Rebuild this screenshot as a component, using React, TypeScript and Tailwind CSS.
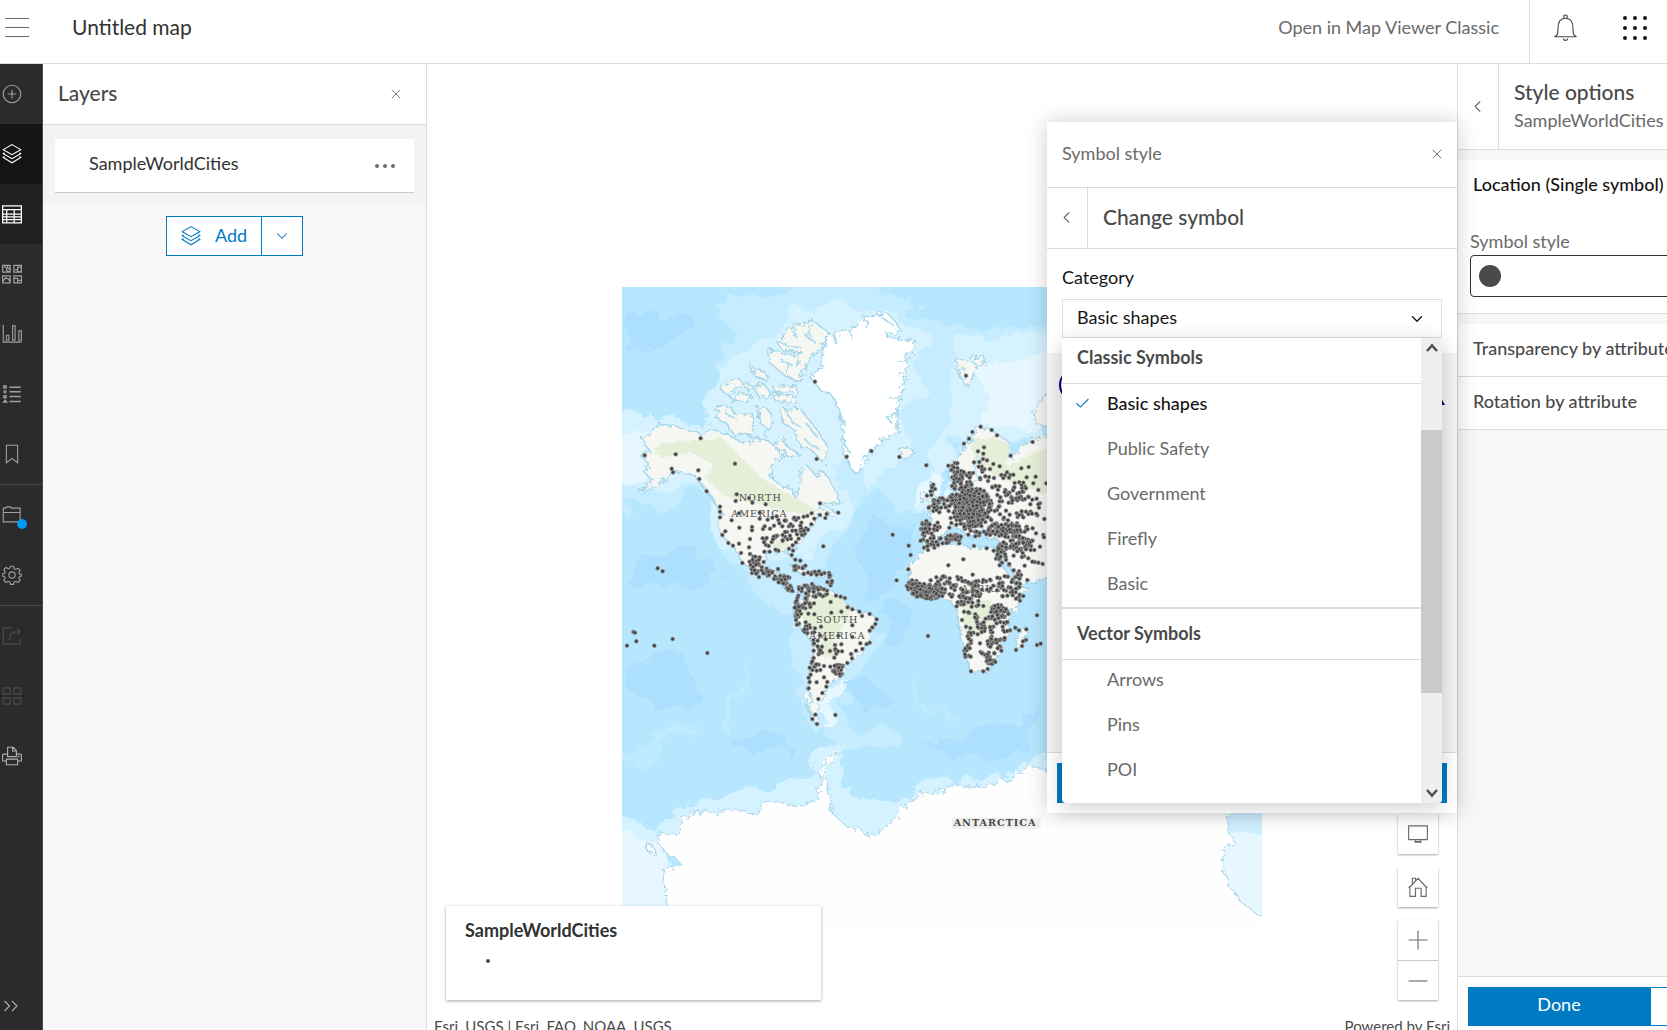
import React, { useMemo, useState } from "react";
import { ChevronDown, ChevronLeft, Check, X } from "lucide-react";

interface IconProps {
  className?: string;
  children: React.ReactNode;
}

// Thin outlined icon on a 32 unit grid
const Icon = ({ className = "size-5", children }: IconProps) => (
  <svg
    viewBox="0 0 32 32"
    className={className}
    fill="none"
    stroke="currentColor"
    strokeWidth="1.8"
    aria-hidden="true"
  >
    {children}
  </svg>
);

const LayersShape = () => (
  <>
    <path d="M16 1 30 9 16 17 2 9z" />
    <path d="M4 14 2 15.500 16 23.500 30 15.500 28 14M4 20 2 21.500 16 30 30 21.500 28 20" />
  </>
);

const gear =
  "M13.500 2h5l1 4 2.500 1 3.500-2 3.500 3.500-2 3.500 1 2.500 4 1v2l-4 1-1 2.500 2 3.500-3.500 3.500-3.500-2-2.500 1-1 4h-5l-1-4-2.500-1-3.500 2L3 24.500 5 21l-1-2.500-3.500-1v-3l3.500-1L5 11 3 7.500 6.500 4 10 6l2.500-1z";

const railTop = [
  {
    label: "Add",
    tone: "text-[#9f9f9f]",
    shape: (
      <>
        <circle cx="16" cy="16" r="14" />
        <path d="M16 9v14M9 16h14" />
      </>
    ),
  },
  { label: "Layers", tone: "bg-[#151515] text-white", shape: <LayersShape /> },
  {
    label: "Tables",
    tone: "bg-[#202020] text-white",
    shape: (
      <path
        d="M1 3h30v27H1zM1 9h30M1 16h30M1 20.500h30M1 25h30M7.500 9v21M19.500 9v21"
        strokeWidth="2"
      />
    ),
  },
  {
    label: "Basemap",
    tone: "text-[#9f9f9f]",
    shape: (
      <path
        d="M1 2h12v11H1zM19 2h12v11H19zM1 19h12v11H1zM19 19h12v11H19zM3 4l4 2 1 5 4 1M9 3v3l4 3M21 9h4V5h6M25 9v3h5M2 27l4-5 4 2 3 4M20 23h5v6M25 26h6"
        strokeWidth="2"
      />
    ),
  },
  {
    label: "Charts",
    tone: "text-[#9f9f9f]",
    shape: <path d="M2 1v28h30M7 18h4v8H7zM17 3h4v23h-4zM27 11h4v15h-4z" />,
  },
  {
    label: "Legend",
    tone: "text-[#9f9f9f]",
    shape: (
      <>
        <path d="M12 5h18M12 12.500h18M12 20h18M12 28h18" strokeWidth="2.4" />
        <path d="M3 3h3.500v3.500H3zM3 18.500h3.500V22H3zM2.500 29 5 26l2.500 3z" strokeWidth="2.2" />
        <circle cx="4.800" cy="12.500" r="1.800" strokeWidth="2" />
      </>
    ),
  },
  {
    label: "Bookmarks",
    tone: "text-[#9f9f9f]",
    shape: <path d="M7 2h18v28l-9-7-9 7z" />,
  },
];

const railBottom = [
  {
    label: "Share",
    tone: "text-[#4a4a4a]",
    shape: <path d="M16 3H2v26h27V20M12 23v-5c0-6 4-9 17-9M24 4l5 5-5 5" />,
  },
  {
    label: "Create app",
    tone: "text-[#4a4a4a]",
    shape: <path d="M2 3h11v10H2zM19 3h11v10H19zM2 19h11v10H2zM19 19h11v10H19z" />,
  },
  {
    label: "Print",
    tone: "text-[#b0b0b0]",
    shape: (
      <path d="M9 16V2h9l5 5v9M17 2v6h6M7 24H1V14l2-1h6v4h14v-4h6l2 1v10h-6M7 21h18v9H7zM25 17h3" />
    ),
  },
];

const RailButton = ({ label, tone, shape }: (typeof railTop)[number]) => (
  <button
    aria-label={label}
    className={`flex h-15 w-full items-center pl-0.5 ${tone}`}
  >
    <Icon>{shape}</Icon>
  </button>
);

const Rail = () => (
  <nav className="flex w-[43px] shrink-0 flex-col border-r border-[#4a4a4a] bg-[#2b2b2b]">
    {railTop.map((item) => (
      <RailButton key={item.label} {...item} />
    ))}
    <div className="border-y border-[#4a4a4a]">
      <button
        aria-label="Save and open"
        className="relative flex h-15 w-full items-center pl-0.5 text-[#9f9f9f]"
      >
        <Icon>
          <path d="M2 27V5h4l1-2h7l1 2h14v22zM2 12h27" />
        </Icon>
        <span className="absolute top-[34px] left-[17px] size-[10px] rounded-full bg-[#009af2]" />
      </button>
      <RailButton
        label="Map properties"
        tone="text-[#9f9f9f]"
        shape={
          <>
            <path d={gear} />
            <circle cx="16" cy="16" r="5" />
          </>
        }
      />
    </div>
    {railBottom.map((item) => (
      <RailButton key={item.label} {...item} />
    ))}
    <button
      aria-label="Expand"
      className="mt-auto flex h-12 items-center pl-0.5 text-[#b0b0b0]"
    >
      <Icon>
        <path d="m4 8 8 8-8 8M16 8l8 8-8 8" />
      </Icon>
    </button>
  </nav>
);

const Header = () => (
  <header className="flex h-16 shrink-0 items-center border-b border-[#dcdcdc] bg-white">
    <button aria-label="Menu" className="mb-2 ml-[5px] flex flex-col gap-2 py-1">
      <span className="h-px w-6 bg-[#6a6a6a]" />
      <span className="h-px w-6 bg-[#6a6a6a]" />
      <span className="h-px w-6 bg-[#6a6a6a]" />
    </button>
    <h1 className="mb-2.5 ml-[43px] text-[21px] text-[#323232]">Untitled map</h1>
    <a href="#classic" className="mr-[30px] mb-2 ml-auto text-[18px] text-[#6a6a6a]">
      Open in Map Viewer Classic
    </a>
    <div className="flex h-full items-center gap-11 border-l border-[#dcdcdc] pr-5 pb-2 pl-[22px]">
      <button aria-label="Notifications" className="text-[#4a4a4a]">
        <Icon className="size-[27px]">
          <path
            d="M3 27h26c-4-2-4-4-4-9 0-8-3-13-9-13s-9 5-9 13c0 5 0 7-4 9zM14 5V2.500C14 .8 18 .8 18 2.500V5M13.500 29c0 3 5 3 5 0"
            strokeWidth="1.400"
          />
        </Icon>
      </button>
      <button aria-label="App launcher" className="grid grid-cols-3 gap-1.5">
        {Array.from({ length: 9 }, (_, index) => (
          <span key={index} className="size-1 rounded-full bg-[#151515]" />
        ))}
      </button>
    </div>
  </header>
);

const LayersPanel = () => (
  <aside className="w-96 shrink-0 border-r border-[#dcdcdc] bg-[#f8f8f8]">
    <div className="flex h-[61px] items-center justify-between border-b border-[#dcdcdc] bg-white pr-[22px] pl-[15px]">
      <h2 className="pb-0.5 text-[21px] font-medium text-[#4a4a4a]">Layers</h2>
      <button aria-label="Close" className="text-[#6a6a6a]">
        <X size={16} strokeWidth={1.3} />
      </button>
    </div>
    <div className="bg-[#f3f3f3] px-3 pt-3.5 pb-3">
      <div className="flex h-[54px] items-center justify-between border-b border-[#cacaca] bg-white pr-[19px] pl-[34px]">
        <span className="pb-1 text-[18px] text-[#323232]">SampleWorldCities</span>
        <button aria-label="Options" className="flex gap-1">
          <span className="size-1 rounded-full bg-[#6a6a6a]" />
          <span className="size-1 rounded-full bg-[#6a6a6a]" />
          <span className="size-1 rounded-full bg-[#6a6a6a]" />
        </button>
      </div>
    </div>
    <div className="flex justify-center pt-[11px]">
      <div className="flex h-10 border border-[#007ac2] bg-white text-[#007ac2]">
        <button className="flex items-center gap-[14px] px-3.5 text-[18px]">
          <Icon>
            <LayersShape />
          </Icon>
          <span className="pb-0.5">Add</span>
        </button>
        <button
          aria-label="More add options"
          className="flex w-[41px] items-center justify-center border-l border-[#007ac2]"
        >
          <ChevronDown size={18} strokeWidth={1.4} />
        </button>
      </div>
    </div>
  </aside>
);

const land = [
  // North America
  "M70 475 115 432 160 437 245 465 270 450 320 462 370 490 400 485 430 475 460 495 490 470 500 500 535 520 520 530 480 528 452 560 450 590 480 615 515 625 528 660 532 635 545 610 540 585 560 555 590 590 605 570 630 600 650 640 660 668 600 672 590 690 625 685 660 700 600 705 580 735 550 760 545 785 525 800 500 815 528 845 505 822 470 812 440 820 430 850 430 880 455 895 480 870 480 900 505 900 515 935 550 942 500 928 470 905 440 888 400 872 370 850 340 800 305 765 293 740 300 690 270 650 235 605 230 590 170 575 155 580 110 615 60 645 100 600 75 580 85 550 65 530 90 515 75 495z",
  // South America
  "M520 990 545 960 570 920 600 920 640 935 685 975 700 990 750 1000 775 1020 750 1065 745 1090 700 1135 680 1160 660 1185 650 1200 620 1215 615 1240 600 1265 590 1305 600 1335 580 1325 562 1290 555 1250 570 1190 580 1130 578 1090 545 1045 525 1010z",
  // Africa
  "M905 810 960 790 1030 790 1050 805 1120 800 1140 850 1170 890 1185 920 1225 920 1200 970 1165 1020 1170 1060 1150 1090 1145 1120 1120 1150 1100 1175 1065 1180 1050 1172 1035 1110 1020 1060 1010 990 990 960 950 950 905 955 870 925 865 870 885 840z",
  // Eurasia
  "M985 595 990 550 1020 525 1040 480 1080 440 1115 450 1165 485 1170 505 1140 495 1160 540 1200 500 1240 475 1500 450 1500 850 1240 905 1195 915 1170 860 1140 810 1135 780 1100 775 1090 740 1050 770 1000 735 975 760 940 785 905 775 905 730 935 725 930 690 975 665 1010 640 1010 610z",
  "M935 605 948 650 962 690 925 692 936 650zM905 640 920 640 918 665 903 668z",
  "M840 510 870 503 884 520 858 536 833 530 845 524z",
  "M1195 1055 1215 1035 1218 1060 1200 1110 1188 1105z",
  // Arctic islands
  "M470 185 520 135 580 122 628 160 600 210 555 255 540 305 500 290 445 245 450 205 500 225 545 215 490 215z",
  "M480 390 540 385 590 450 625 500 612 550 575 510 540 500 525 450 490 430z",
  "M290 378 335 380 345 405 400 400 400 460 340 465 320 430 290 415z",
  "M415 385 440 385 460 410 450 450 420 430zM460 340 530 350 525 370 470 365zM300 325 350 290 370 310 320 345zM345 340 395 345 385 365 345 360zM400 325 430 310 455 345 420 355zM395 258 440 280 445 305 400 285zM460 320 530 315 530 335 465 338zM375 310 395 315 385 335zM470 505 500 515 485 535zM330 350 350 362 335 370z",
  "M1010 240 1030 240 1090 225 1100 245 1065 270 1045 320 1035 315 1015 280z",
  "M1279 340 1240 400 1250 435 1279 440 1500 440 1500 300z",
  "M510 855 545 862 580 880 540 880zM585 880 615 882 610 890 585 888z",
];

const greenland =
  "M628 165 690 150 740 110 800 97 830 130 845 155 800 160 800 172 850 178 890 185 860 240 855 300 840 360 830 390 835 450 790 480 755 510 740 530 720 580 700 575 670 520 670 470 660 400 650 370 635 345 600 330 570 290 600 265 605 230 620 190z";

// Coasts cut up by narrow inlets
const fjords =
  "M470 185 500 195 545 205M520 140 530 175M580 130 560 170 590 190M480 240 510 250 500 290M540 215 530 260M640 165 650 195M690 155 700 180M740 120 745 150M780 110 820 135M855 240 835 250M852 280 832 290M842 350 815 360M835 400 800 410 815 430M660 400 675 440M672 490 690 520M500 395 520 430 545 440M560 430 590 470M555 480 600 510M430 475 445 440M380 465 420 475M310 395 350 420M1020 260 1040 270 1035 300M1050 240 1070 255M235 600 260 630 285 665M292 675 305 700M1000 560 1020 545M1040 490 1060 475M990 590 1005 580M560 1220 575 1260 565 1300M558 1270 578 1310";

const antarctica =
  "M141 1877 129 1785 137 1765 182 1752 165 1732 147 1730 133 1710 115 1690 115 1650 140 1662 175 1660 185 1618 230 1595 300 1597 350 1590 385 1600 418 1602 422 1567 460 1562 490 1572 540 1578 590 1560 604 1500 595 1475 640 1420 662 1415 612 1470 605 1492 622 1500 632 1560 632 1595 686 1646 720 1645 735 1667 765 1667 830 1615 835 1592 893 1553 900 1530 905 1545 955 1535 985 1518 1030 1518 1095 1520 1130 1507 1135 1490 1165 1508 1170 1495 1235 1453 1279 1475 1822 1475 1822 1650 1845 1690 1810 1703 1809 1775 1829 1805 1820 1815 1850 1840 1855 1860 1916 1907 1990 1895 1990 1995 145 1995z";

// Cities that stand on their own
const lonely = [
  585, 305, 1038, 287, 242, 475, 74, 526, 167, 523, 345, 551, 155, 566, 159, 577, 235, 571, 238, 597, 260, 634, 680, 530,
  754, 513, 838, 531, 590, 537, 919, 556, 1082, 440, 1115, 450, 1131, 466, 1057, 456, 1047, 476, 1032, 491, 1238, 486,
  1172, 527, 1092, 502, 1074, 514, 1090, 521, 1139, 559, 1204, 565, 1226, 561, 1122, 594, 350, 643, 347, 663, 387, 654,
  397, 668, 437, 673, 357, 700, 419, 698, 335, 721, 419, 716, 457, 713, 300, 680, 300, 695, 300, 712, 358, 743, 396, 741,
  396, 751, 390, 777, 357, 791, 387, 802, 435, 779, 438, 795, 307, 765, 316, 754, 325, 789, 339, 797, 363, 819, 390, 822,
  367, 849, 600, 670, 655, 698, 620, 702, 600, 705, 616, 714, 575, 700, 562, 708, 551, 710, 583, 716, 574, 733, 558, 745,
  550, 765, 536, 776, 528, 787, 518, 796, 507, 806, 519, 812, 515, 825, 526, 839, 541, 842, 474, 867, 475, 812, 449, 815,
  433, 815, 610, 799, 818, 764, 866, 797, 872, 825, 830, 901, 865, 868, 113, 865, 128, 874, 985, 856, 1030, 838, 1058, 884,
  632, 966, 648, 947, 662, 950, 675, 954, 683, 982, 697, 988, 718, 995, 664, 995, 634, 998, 749, 1002, 565, 1001, 583, 1003,
  557, 1027, 726, 1008, 697, 1036, 770, 1018, 766, 1032, 757, 1042, 749, 1052, 697, 1071, 655, 1067, 749, 1088, 740, 1092,
  721, 1090, 727, 1107, 708, 1112, 693, 1122, 696, 1135, 682, 1149, 664, 1093, 666, 1114, 650, 1117, 643, 1133, 612, 1158,
  606, 1118, 606, 1100, 580, 1080, 581, 1092, 581, 1112, 581, 1134, 575, 1149, 577, 1170, 572, 1184, 566, 1193, 569, 1206,
  590, 1207, 612, 1192, 622, 1206, 619, 1220, 607, 1239, 566, 1225, 595, 1257, 586, 1304, 577, 1317, 591, 1332, 646, 1305,
  601, 1170, 631, 1160, 21, 1097, 40, 1056, 45, 1058, 49, 1084, 103, 1097, 158, 1077, 262, 1119, 924, 1068, 1251, 1006,
  1251, 1095, 1262, 1091, 1186, 1043, 1197, 1051, 1219, 1048, 1218, 1080, 1209, 1084, 1206, 1098, 1188, 1110, 1053, 1174,
  1090, 1174, 1103, 1167, 1144, 1112, 1153, 1079, 1170, 1051, 1033, 1112, 1036, 1130, 1045, 1095, 1080, 1090, 1072, 1012,
  1090, 978, 1222, 900, 1268, 852, 1255, 848, 1270, 765, 1272, 772, 1279, 610, 1260, 670, 1232, 695, 1190, 700, 1250, 656,
  1247, 590, 1255, 630, 1220, 592, 1240, 610, 1215, 620, 1205, 705, 1238, 745, 1210, 636, 1224, 650, 1238, 782, 1220, 745,
  1260, 800, 1243, 810, 1225, 835, 932, 775, 988, 743, 1018, 790, 1062, 798, 1100, 805, 943, 803, 968, 790,
];

// Dense areas: centre x, centre y, radius x, radius y, number of cities
const clusters = [
  [1062, 675, 48, 46, 170],
  [1005, 678, 55, 32, 70],
  [1090, 700, 30, 35, 36],
  [1025, 610, 30, 35, 42],
  [1085, 570, 35, 38, 18],
  [1000, 565, 16, 32, 12],
  [1165, 640, 50, 60, 44],
  [1190, 700, 80, 80, 45],
  [1150, 750, 55, 20, 90],
  [1200, 790, 35, 22, 45],
  [1150, 795, 12, 15, 16],
  [1185, 830, 65, 40, 30],
  [1060, 745, 25, 25, 24],
  [1020, 720, 50, 22, 24],
  [915, 745, 12, 22, 26],
  [942, 745, 16, 22, 12],
  [940, 655, 18, 45, 24],
  [1000, 773, 22, 10, 26],
  [950, 785, 38, 12, 14],
  [915, 795, 18, 16, 8],
  [882, 918, 20, 16, 34],
  [925, 936, 48, 20, 100],
  [985, 910, 75, 20, 40],
  [1040, 945, 48, 42, 62],
  [1130, 920, 65, 32, 36],
  [1190, 900, 14, 28, 18],
  [1190, 945, 22, 25, 14],
  [1140, 990, 26, 24, 42],
  [1055, 1025, 38, 42, 24],
  [1125, 1045, 38, 38, 36],
  [1045, 1105, 14, 35, 12],
  [1110, 1100, 30, 30, 26],
  [1110, 1143, 16, 12, 14],
  [1140, 830, 12, 35, 10],
  [475, 760, 45, 50, 24],
  [520, 745, 42, 36, 28],
  [408, 855, 24, 26, 26],
  [433, 880, 25, 13, 16],
  [485, 900, 24, 16, 34],
  [520, 925, 20, 12, 12],
  [530, 862, 28, 8, 13],
  [580, 878, 34, 6, 15],
  [630, 898, 8, 22, 10],
  [575, 925, 40, 12, 20],
  [560, 955, 26, 28, 24],
  [595, 940, 26, 18, 10],
  [533, 1000, 10, 38, 24],
  [565, 1050, 24, 14, 13],
  [600, 1080, 18, 42, 12],
  [648, 1110, 18, 22, 9],
  [655, 1168, 16, 18, 28],
  [585, 1160, 16, 18, 7],
];

const makeCities = () => {
  const cities: number[][] = [];
  for (let i = 0; i < lonely.length; i += 2) {
    cities.push([lonely[i], lonely[i + 1]]);
  }
  let seed = 7;
  const next = () => {
    seed = (seed * 16807) % 2147483647;
    return seed / 2147483647;
  };
  clusters.forEach(([cx, cy, rx, ry, count]) => {
    for (let i = 0; i < count; i++) {
      const angle = next() * Math.PI * 2;
      const distance = Math.pow(next(), 0.6) * 1.1;
      cities.push([
        Math.round(cx + Math.cos(angle) * distance * rx),
        Math.round(cy + Math.sin(angle) * distance * ry),
      ]);
    }
  });
  return cities;
};

const WorldMap = () => {
  const cities = useMemo(makeCities, []);

  return (
    <svg
      viewBox="6 21 1920 1920"
      className="size-160 shrink-0"
      role="img"
      aria-label="World map of sample cities"
    >
      <defs>
        <filter id="coast" x="-5%" y="-5%" width="110%" height="110%">
          <feTurbulence type="fractalNoise" baseFrequency="0.06" numOctaves="4" seed="4" />
          <feDisplacementMap in="SourceGraphic" scale="30" />
        </filter>
        <filter id="depth" x="-10%" y="-10%" width="120%" height="120%">
          <feTurbulence type="fractalNoise" baseFrequency="0.01" numOctaves="5" seed="9" />
          <feDisplacementMap
            in="SourceGraphic"
            scale="130"
            xChannelSelector="R"
            yChannelSelector="G"
          />
        </filter>
      </defs>
      <rect x="6" y="21" width="1920" height="1920" fill="#b7e6ff" />
      <g filter="url(#depth)">
        <path
          d="M300 60 560 20 870 20 900 130 1000 170 1300 130V480L1000 500 900 700 760 620 660 780 560 900 640 1010 800 1040 760 1120 660 1240 700 1330 830 1350 820 1400 660 1420 600 1350 540 1320 545 1180 500 1000 330 860 240 640 40 700-80 660V440L110 420 240 440 300 300z"
          fill="#c6edff"
        />
        <path
          d="M-80 390 80 400 230 440 300 280 420 180 520 90 640 80 850 80 920 200 900 350 850 480 740 610 660 560 700 700 580 800 500 860 300 820 220 620 100 620-80 670zM1000 200 1300 150V480H1000L960 700 890 700 930 600 980 480z"
          fill="#d6f2ff"
        />
        <path
          d="M-80 430 70 470 50 620-80 650zM1040 260 1300 190V470L1100 420zM925 580 990 600 960 690 900 680zM620 1200 680 1190 640 1300 600 1330z"
          fill="#e6f7ff"
        />
        <path
          d="M20 880 100 850 210 790 300 900 250 960 160 930 60 900zM40 1150 160 1120 260 1230 200 1280 40 1260zM320 1380 440 1330 520 1400 440 1440 340 1420zM700 800 850 700 860 900 720 950zM660 1200 760 1190 820 1260 700 1290zM900 1360 1050 1390 1250 1290 1250 1400 1000 1460zM790 970 860 980 850 1090 800 1100zM30 80 220 110 200 160 40 240z"
          fill="#addfff"
        />
        <path
          d="M-80 1430 120 1380 240 1320 250 1350 100 1440-80 1480zM360 1110 370 1240 330 1340 310 1340 350 1230zM870 1180 920 1280 1050 1330 1000 1340 880 1260z"
          fill="#c0eaff"
        />
        <path
          d="M-80 1600 100 1650 180 1590 250 1560 400 1530 560 1480 600 1400 680 1390 660 1500 720 1560 830 1570 900 1510 1050 1500 1280 1430V1700H-80z"
          fill="#d4f2ff"
        />
        <path d="M-80 1670 140 1690 160 2000H-80z" fill="#e6f7ff" />
      </g>
      <path d="M1800 1560h126v120l-70-28-56 20z" fill="#d0efff" />
      <path d="M1800 1672 1856 1652 1926 1666v274h-126z" fill="#e6f7ff" />
      <g filter="url(#coast)" stroke="#a3d3e6" strokeWidth="4">
        {land.map((d) => (
          <path key={d} d={d} fill="#f6f6f3" />
        ))}
        <path d={greenland} fill="#ffffff" />
        <path d={antarctica} fill="#fefefe" strokeWidth="3" />
        <path d="M80 1690 98 1695 103 1715 90 1720 78 1705z" fill="#ffffff" />
        <g stroke="none" fill="#e5efd7">
          <path d="M105 500 170 485 300 470 420 590 500 640 590 690 560 705 450 680 320 650 260 600 280 550 220 520 110 530z" />
          <path d="M545 985 590 925 660 950 700 995 650 1060 645 1130 610 1135 600 1060 550 1030z" />
          <path d="M1020 960 1110 960 1130 1020 1080 1070 1035 1070z" />
          <path d="M1060 480 1110 470 1170 490 1160 560 1279 500 1500 500V640H1270L1130 590 1060 540z" />
          <path d="M450 790 500 780 510 800 470 810z" />
        </g>
        <path d={fjords} fill="none" stroke="#b0dcec" strokeWidth="6" />
        <path
          d="M1080 525 1062 560 1075 600 1035 620 1020 640M1100 740 1165 728M1165 870 1190 910"
          fill="none"
          stroke="#c4e9fa"
          strokeWidth="9"
        />
      </g>
      <g className="fill-[#4a4a4a] font-[DejaVu_Serif,serif] text-[29px] tracking-widest">
        <text x="356" y="662">NORTH</text>
        <text x="334" y="710">AMERICA</text>
        <text x="588" y="1029">SOUTH</text>
        <text x="568" y="1077">AMERICA</text>
        <text x="1024" y="936">AFRICA</text>
        <rect x="996" y="1613" width="266" height="33" fill="#efefeb" />
        <text x="1001" y="1639" className="font-bold">ANTARCTICA</text>
      </g>
      <g fill="#454545" stroke="#a8a8a8" strokeWidth="2">
        {cities.map(([cx, cy], index) => (
          <circle key={index} cx={cx} cy={cy} r="6" />
        ))}
      </g>
    </svg>
  );
};

const groups = [
  {
    title: "Classic Symbols",
    items: ["Basic shapes", "Public Safety", "Government", "Firefly", "Basic"],
  },
  { title: "Vector Symbols", items: ["Arrows", "Pins", "POI"] },
];

const CategoryList = ({
  value,
  onSelect,
}: {
  value: string;
  onSelect: (value: string) => void;
}) => (
  <div className="absolute top-full right-0 left-0 z-10 flex h-[465px] overflow-hidden rounded-sm bg-white shadow-[0_4px_20px_rgba(0,0,0,0.2)]">
    <div className="min-w-0 flex-1">
      {groups.map((group, groupIndex) => (
        <section
          key={group.title}
          className={groupIndex ? "border-t-2 border-[#dcdcdc]" : ""}
        >
          <h4
            className={`flex items-center border-b border-[#dcdcdc] px-[15px] text-[18px] font-bold text-[#4a4a4a] ${
              groupIndex ? "h-[51px] pb-0.5" : "h-[46px] pb-1.5"
            }`}
          >
            {group.title}
          </h4>
          <ul className={groupIndex ? "" : "h-[223px]"}>
            {group.items.map((item) => (
              <li key={item}>
                <button
                  onClick={() => onSelect(item)}
                  className={`flex h-[45px] w-full items-center gap-4 pb-1.5 pl-3 text-left text-[18px] ${
                    item === value ? "font-medium text-[#151515]" : "text-[#6a6a6a]"
                  }`}
                >
                  <Check
                    size={17}
                    strokeWidth={1.5}
                    className={item === value ? "text-[#007ac2]" : "invisible"}
                  />
                  {item}
                </button>
              </li>
            ))}
          </ul>
        </section>
      ))}
    </div>
    <div className="flex w-[21px] flex-col items-center bg-[#efefef] text-[#505050]">
      <svg viewBox="0 0 12 12" className="mt-1 size-3" aria-hidden="true">
        <path d="M1 9 6 3.500 11 9" fill="none" stroke="currentColor" strokeWidth="2.600" />
      </svg>
      <div className="mt-19 h-[263px] w-full bg-[#cacaca]" />
      <svg viewBox="0 0 12 12" className="mt-auto mb-1 size-3" aria-hidden="true">
        <path d="M1 3 6 8.500 11 3" fill="none" stroke="currentColor" strokeWidth="2.600" />
      </svg>
    </div>
  </div>
);

const SymbolPopover = () => {
  const [category, setCategory] = useState("Basic shapes");

  return (
    <div className="absolute top-[58px] right-0 z-10 flex h-[691px] w-[410px] flex-col bg-white shadow-[0_0_20px_rgba(0,0,0,0.2)]">
      <div className="flex h-[66px] items-center justify-between border-b border-[#dcdcdc] pr-3 pb-0.5 pl-[15px]">
        <h3 className="text-[18px] text-[#6a6a6a]">Symbol style</h3>
        <button aria-label="Close" className="text-[#6a6a6a]">
          <X size={16} strokeWidth={1.4} />
        </button>
      </div>
      <div className="flex h-[61px] border-b border-[#dcdcdc]">
        <button
          aria-label="Back"
          className="flex w-[41px] items-center justify-center border-r border-[#dcdcdc] pr-0.5 pb-0.5 text-[#6a6a6a]"
        >
          <ChevronLeft size={19} strokeWidth={1.4} />
        </button>
        <h3 className="flex items-center px-[15px] pb-0.5 text-[21px] font-medium text-[#4a4a4a]">
          Change symbol
        </h3>
      </div>
      <div className="px-[15px] pt-3.5 pb-[15px]">
        <label htmlFor="category" className="block text-[18px] leading-7 text-[#151515]">
          Category
        </label>
        <div className="relative mt-2">
          <select
            id="category"
            value={category}
            onChange={(event) => setCategory(event.target.value)}
            className="block h-[39px] w-full appearance-none border border-[#dfdfdf] bg-white px-3.5 pb-0.5 text-[18px] text-[#151515]"
          >
            {groups.map((group) => (
              <optgroup key={group.title} label={group.title}>
                {group.items.map((item) => (
                  <option key={item}>{item}</option>
                ))}
              </optgroup>
            ))}
          </select>
          <ChevronDown
            size={18}
            strokeWidth={1.7}
            className="pointer-events-none absolute top-[11px] right-4 text-[#151515]"
          />
          <CategoryList value={category} onSelect={setCategory} />
        </div>
      </div>
      <div className="flex flex-1 justify-between bg-[#f3f3f3] px-3 pt-4">
        <svg viewBox="0 0 32 32" className="size-8" aria-hidden="true">
          <circle cx="16" cy="16" r="15" fill="none" stroke="#00007f" strokeWidth="2" />
        </svg>
        <svg viewBox="0 0 32 32" className="size-9" aria-hidden="true">
          <path d="M16 4 32 32H0z" fill="#00007f" />
        </svg>
      </div>
      <div className="border-t border-[#dcdcdc] bg-white p-2.5">
        <button className="h-10 w-full bg-[#007ac2] text-[18px] text-white">Done</button>
      </div>
    </div>
  );
};

const MapTools = () => (
  <div className="absolute right-[19px] bottom-[30px] flex w-10 flex-col gap-[13px] text-[#6a6a6a]">
    <button
      aria-label="Presentation mode"
      className="flex size-10 items-center justify-center bg-white shadow-[0_1px_2px_rgba(0,0,0,0.35)]"
    >
      <Icon>
        <path d="M1 3h30v22H1zM12 25v3h8v-3M10 29h12" />
      </Icon>
    </button>
    <button
      aria-label="Default view"
      className="flex size-10 items-center justify-center bg-white shadow-[0_1px_2px_rgba(0,0,0,0.35)]"
    >
      <Icon>
        <path d="M3 16 16 2l13 14v15h-8V18h-9v13H3zM7 11V2h5v4M1 17l2-2M31 17l-2-2" />
      </Icon>
    </button>
    <div className="bg-white shadow-[0_1px_2px_rgba(0,0,0,0.35)]">
      <button
        aria-label="Zoom in"
        className="flex h-[41px] w-10 items-center justify-center border-b border-[#cacaca]"
      >
        <Icon>
          <path d="M16 1v30M1 16h30" />
        </Icon>
      </button>
      <button aria-label="Zoom out" className="flex h-[39px] w-10 items-center justify-center">
        <Icon>
          <path d="M1 16h30" />
        </Icon>
      </button>
    </div>
  </div>
);

const MapView = () => (
  <main className="relative min-w-0 flex-1 bg-white">
    <div className="flex h-full justify-center overflow-hidden pt-[223px]">
      <WorldMap />
    </div>
    <MapTools />
    <div className="absolute bottom-[30px] left-[19px] h-[94px] w-[375px] bg-white px-[19px] pt-2.5 shadow-[0_1px_3px_rgba(0,0,0,0.35)]">
      <h3 className="text-[18px] leading-7 font-bold text-[#323232]">SampleWorldCities</h3>
      <div className="mt-[15px] ml-[21px] size-1 rounded-full bg-[#4a4a4a]" />
    </div>
    <div className="absolute right-0 bottom-0 left-0 flex h-4 justify-between overflow-hidden px-[7px] text-[15px] leading-6 text-[#4a4a4a]">
      <span>Esri, USGS | Esri, FAO, NOAA, USGS</span>
      <span>
        Powered by <a href="#esri">Esri</a>
      </span>
    </div>
    <SymbolPopover />
  </main>
);

const StylePanel = () => (
  <aside className="flex w-[210px] shrink-0 flex-col overflow-hidden border-l border-[#dcdcdc] bg-[#f7f7f7] whitespace-nowrap">
    <div className="flex h-[86px] border-b border-[#dcdcdc] bg-white">
      <button
        aria-label="Back"
        className="flex w-[41px] shrink-0 items-center justify-center border-r border-[#dcdcdc] pr-0.5 text-[#6a6a6a]"
      >
        <ChevronLeft size={19} strokeWidth={1.4} />
      </button>
      <div className="px-[15px] pt-3.5">
        <h2 className="text-[21px] leading-7 font-medium text-[#4a4a4a]">Style options</h2>
        <p className="text-[18px] leading-7 text-[#6a6a6a]">SampleWorldCities</p>
      </div>
    </div>
    <section className="mt-2.5 h-[154px] border-b border-[#dcdcdc] bg-white pt-2.5 pl-3">
      <h3 className="pl-[3px] text-[18px] leading-7 font-medium text-[#151515]">
        Location (Single symbol)
      </h3>
      <label htmlFor="symbol" className="mt-[29px] block text-[18px] leading-7 text-[#6a6a6a]">
        Symbol style
      </label>
      <button
        id="symbol"
        className="flex h-[42px] w-[330px] items-center rounded border border-[#323232] pl-2"
      >
        <span className="size-[22px] rounded-full bg-[#4a4a4a]" />
      </button>
    </section>
    <button className="mt-2.5 h-[53px] border-b border-[#dcdcdc] bg-white pb-1 pl-[15px] text-left text-[18px] font-medium text-[#4a4a4a]">
      Transparency by attribute
    </button>
    <button className="h-[53px] border-b border-[#dcdcdc] bg-white pb-1 pl-[15px] text-left text-[18px] font-medium text-[#4a4a4a]">
      Rotation by attribute
    </button>
    <div className="mt-auto flex h-[54px] border-t border-[#dcdcdc] bg-white pt-2.5 pl-2.5">
      <button className="h-[39px] w-[182px] shrink-0 bg-[#007ac2] pb-1 text-[18px] text-white">
        Done
      </button>
      <button
        aria-label="Cancel"
        className="h-[39px] w-[182px] shrink-0 border border-[#007ac2] bg-white"
      />
    </div>
  </aside>
);

export default function App() {
  return (
    <div className="flex h-screen flex-col overflow-hidden bg-white font-[Lato,'Liberation_Sans',sans-serif]">
      <Header />
      <div className="flex min-h-0 flex-1">
        <Rail />
        <LayersPanel />
        <MapView />
        <StylePanel />
      </div>
    </div>
  );
}
